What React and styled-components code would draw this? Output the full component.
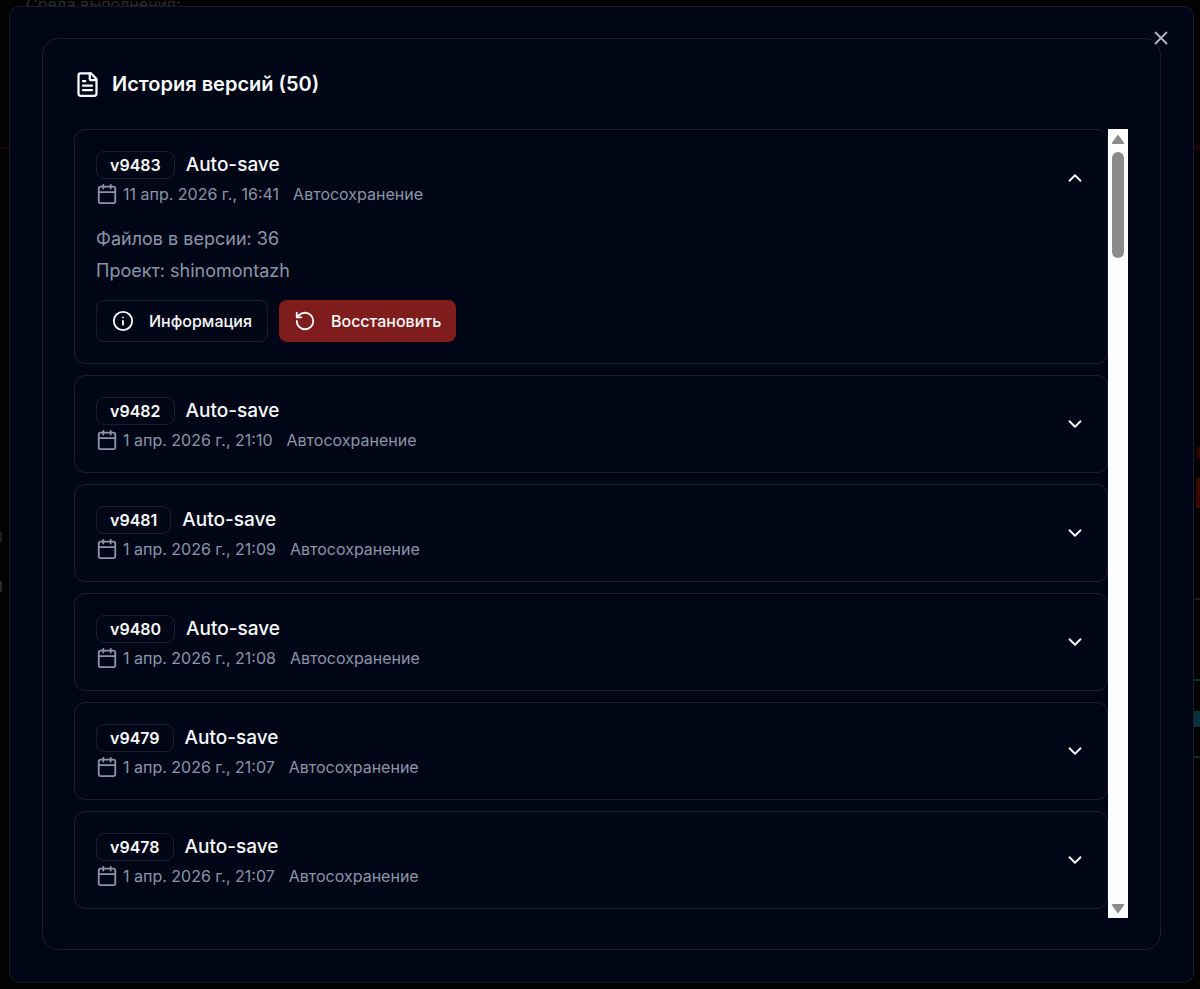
import React, { useState } from 'react';
import styled, { createGlobalStyle } from 'styled-components';
import { FileText, Calendar, Info, RotateCcw, ChevronDown, ChevronUp, X } from 'lucide-react';

const GlobalStyle = createGlobalStyle`
  *, *::before, *::after { box-sizing: border-box; }
  body {
    margin: 0;
    background: #020203;
    color: #f8fafc;
    font-family: Inter, "Liberation Sans", sans-serif;
    font-size: 16px;
  }
  h2, h3, p { margin: 0; font: inherit; }
  button { font: inherit; color: inherit; cursor: pointer; }
  svg { display: block; flex: none; }
`;

const Overlay = styled.main`
  position: relative;
  min-height: 100vh;
  padding: 6px 6px 6px 9px;
  overflow: hidden;
`;

const Backdrop = styled.div`
  position: absolute;
  inset: 0;
  overflow: hidden;
`;

const BackdropLabel = styled.span`
  position: absolute;
  top: -7px;
  left: 26px;
  font-size: 16px;
  line-height: 22px;
  color: #2b2b2d;
`;

const EdgeMark = styled.i`
  position: absolute;
  top: ${(p) => p.$top}px;
  ${(p) => p.$side}: 0;
  width: ${(p) => p.$width}px;
  height: ${(p) => p.$height}px;
  background: ${(p) => p.$color};
`;

const Dialog = styled.section`
  position: relative;
  padding: 31px 32px 32px;
  background: #010616;
  border: 1px solid #161c28;
  border-radius: 10px;
`;

const CloseButton = styled.button`
  position: absolute;
  top: 20px;
  right: 21px;
  padding: 0;
  border: 0;
  background: none;
  color: #b3b5ba;
`;

const Card = styled.div`
  padding: 30px 32px 31px 31px;
  border: 1px solid #191f2b;
  border-radius: 16px;
`;

const Title = styled.h2`
  display: flex;
  align-items: center;
  gap: 11px;
  margin-bottom: 30px;
  font-size: 20px;
  line-height: 30px;
  font-weight: 600;
`;

const ScrollArea = styled.div`
  display: flex;
  height: calc(100vh - 200px);
`;

const List = styled.div`
  flex: 1;
  min-width: 0;
  display: flex;
  flex-direction: column;
  gap: 11px;
  overflow: hidden;
`;

const Item = styled.article`
  flex: none;
  border: 1px solid #191f2b;
  border-radius: 11px;
`;

const ItemHeader = styled.div`
  display: flex;
  align-items: center;
  justify-content: space-between;
  padding: 21px;
`;

const NameRow = styled.div`
  display: flex;
  align-items: center;
  gap: 11px;
`;

const Badge = styled.span`
  padding: 0 13px;
  border: 1px solid #191f2b;
  border-radius: 8px;
  font-size: 16px;
  line-height: 26px;
  font-weight: 600;
`;

const Name = styled.h3`
  font-size: 19px;
  line-height: 28px;
  font-weight: 500;
`;

const Meta = styled.div`
  display: flex;
  align-items: center;
  gap: 14px;
  margin-top: 4px;
  color: #8b95a9;
  font-size: 16px;
  line-height: 22px;
`;

const DateText = styled.span`
  display: flex;
  align-items: center;
  gap: 5px;
`;

const Toggle = styled.button`
  padding: 0;
  border: 0;
  background: none;
`;

const Details = styled.div`
  margin-top: -3px;
  padding: 0 21px 21px;
  color: #8b95a9;
  font-size: 18px;
  line-height: 32px;
`;

const Actions = styled.div`
  display: flex;
  gap: 11px;
  margin-top: 13px;
`;

const Button = styled.button`
  display: flex;
  align-items: center;
  gap: 15px;
  height: 42px;
  padding: 0 15px;
  border: ${(p) => (p.$danger ? '0' : '1px solid #191f2b')};
  border-radius: 8px;
  background: ${(p) => (p.$danger ? '#7f1d1d' : 'transparent')};
  color: #f8fafc;
  font-size: 16px;
  line-height: 22px;
  font-weight: 500;
`;

const Scrollbar = styled.div`
  flex: none;
  display: flex;
  flex-direction: column;
  align-items: center;
  width: 20px;
  background: #fcfcfc;
`;

const Track = styled.div`
  flex: 1;
  width: 12px;
`;

const Thumb = styled.div`
  height: 106px;
  border-radius: 6px;
  background: #8b8b8b;
`;

const Arrow = ({ down }) => (
  <svg width="20" height="23" viewBox="0 0 20 23" aria-hidden="true">
    <path
      d={down ? 'M5 10H15L10 17Z' : 'M5 14H15L10 7Z'}
      fill="#8b8b8b"
      stroke="#8b8b8b"
      strokeWidth="2"
      strokeLinejoin="round"
    />
  </svg>
);

const versions = [
  { id: 'v9483', date: '11 апр. 2026 г., 16:41', files: 36, project: 'shinomontazh' },
  { id: 'v9482', date: '1 апр. 2026 г., 21:10', files: 36, project: 'shinomontazh' },
  { id: 'v9481', date: '1 апр. 2026 г., 21:09', files: 36, project: 'shinomontazh' },
  { id: 'v9480', date: '1 апр. 2026 г., 21:08', files: 36, project: 'shinomontazh' },
  { id: 'v9479', date: '1 апр. 2026 г., 21:07', files: 36, project: 'shinomontazh' },
  { id: 'v9478', date: '1 апр. 2026 г., 21:07', files: 36, project: 'shinomontazh' },
];

const edgeMarks = [
  { side: 'left', top: 147, width: 9, height: 2, color: '#180305' },
  { side: 'left', top: 532, width: 2, height: 10, color: '#1c1c1e' },
  { side: 'left', top: 581, width: 2, height: 11, color: '#2a2a2c' },
  { side: 'right', top: 146, width: 7, height: 3, color: '#2c0407' },
  { side: 'right', top: 447, width: 3, height: 12, color: '#2e0800' },
  { side: 'right', top: 478, width: 4, height: 30, color: '#3a0a00' },
  { side: 'right', top: 598, width: 5, height: 2, color: '#1a1a1c' },
  { side: 'right', top: 679, width: 7, height: 2, color: '#082c30' },
  { side: 'right', top: 711, width: 6, height: 16, color: '#07333a' },
  { side: 'right', top: 756, width: 7, height: 2, color: '#082c30' },
];

function Version({ version, open, onToggle }) {
  const Chevron = open ? ChevronUp : ChevronDown;
  return (
    <Item>
      <ItemHeader>
        <div>
          <NameRow>
            <Badge>{version.id}</Badge>
            <Name>Auto-save</Name>
          </NameRow>
          <Meta>
            <DateText>
              <Calendar size={22} />
              {version.date}
            </DateText>
            <span>Автосохранение</span>
          </Meta>
        </div>
        <Toggle type="button" aria-expanded={open} aria-label={version.id} onClick={onToggle}>
          <Chevron size={22} />
        </Toggle>
      </ItemHeader>
      {open && (
        <Details>
          <p>Файлов в версии: {version.files}</p>
          <p>Проект: {version.project}</p>
          <Actions>
            <Button type="button">
              <Info size={22} />
              Информация
            </Button>
            <Button type="button" $danger>
              <RotateCcw size={22} />
              Восстановить
            </Button>
          </Actions>
        </Details>
      )}
    </Item>
  );
}

export default function App() {
  const [openId, setOpenId] = useState('v9483');
  return (
    <>
      <GlobalStyle />
      <Overlay>
        <Backdrop aria-hidden="true">
          <BackdropLabel>Среда выполнения:</BackdropLabel>
          {edgeMarks.map((m) => (
            <EdgeMark
              key={m.side + m.top}
              $side={m.side}
              $top={m.top}
              $width={m.width}
              $height={m.height}
              $color={m.color}
            />
          ))}
        </Backdrop>
        <Dialog role="dialog" aria-labelledby="history-title">
          <Card>
            <Title id="history-title">
              <FileText size={27} />
              История версий (50)
            </Title>
            <ScrollArea>
              <List>
                {versions.map((v) => (
                  <Version
                    key={v.id}
                    version={v}
                    open={v.id === openId}
                    onToggle={() => setOpenId(v.id === openId ? null : v.id)}
                  />
                ))}
              </List>
              <Scrollbar aria-hidden="true">
                <Arrow />
                <Track>
                  <Thumb />
                </Track>
                <Arrow down />
              </Scrollbar>
            </ScrollArea>
          </Card>
          <CloseButton type="button" aria-label="Закрыть">
            <X size={22} />
          </CloseButton>
        </Dialog>
      </Overlay>
    </>
  );
}
